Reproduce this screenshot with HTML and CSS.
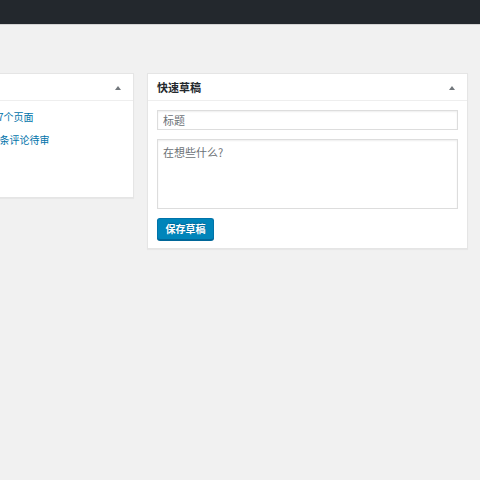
FILE: index.html
```html
<!DOCTYPE html>
<html lang="zh-CN">
<head>
<meta charset="utf-8">
<title>仪表盘</title>
<link rel="stylesheet" href="styles.css">
</head>
<body>
<div class="adminbar"></div>
<div class="content">
  <div class="columns">
    <section class="card card-left">
      <header class="card-head">
        <h2 class="card-title">概览</h2>
        <span class="toggle"></span>
      </header>
      <div class="glance">
        <ul class="glance-list">
          <li class="glance-item"><a href="#" class="glance-link">1篇文章</a></li>
          <li class="glance-item"><a href="#" class="glance-link pages-link">7个页面</a></li>
          <li class="glance-item"><a href="#" class="glance-link">1条评论</a></li>
          <li class="glance-item"><a href="#" class="glance-link mod-link">0条评论待审</a></li>
        </ul>
      </div>
    </section>
    <section class="card card-right">
      <header class="card-head">
        <h2 class="card-title">快速草稿</h2>
        <span class="toggle"></span>
      </header>
      <form class="draft">
        <input class="field title-field" type="text" placeholder="标题">
        <textarea class="field body-field" placeholder="在想些什么?"></textarea>
        <div class="actions"><button type="button" class="btn-primary">保存草稿</button></div>
      </form>
    </section>
  </div>
</div>
</body>
</html>
```
FILE: styles.css
```css
html, body {
  margin: 0;
  padding: 0;
}
body {
  background: #f1f1f1;
  font-family: "Noto Sans CJK SC", "Noto Sans", sans-serif;
  font-size: 10px;
  color: #444;
  width: 480px;
  height: 480px;
  overflow: hidden;
}
.adminbar {
  height: 24px;
  background: #23282d;
  box-shadow: 0 1px 0 rgba(0,0,0,0.12);
}
.content {
  padding-top: 49px;
}
.columns {
  display: flex;
  align-items: flex-start;
  gap: 13px;
  margin-left: -134px;
}
.card {
  background: #fff;
  border: 1px solid #e5e5e5;
  box-shadow: 0 1px 1px rgba(0,0,0,0.04);
  box-sizing: border-box;
  flex: none;
}
.card-left {
  width: 268px;
  height: 125px;
}
.card-right {
  width: 321px;
}
.card-head {
  height: 26px;
  border-bottom: 1px solid #eee;
  display: flex;
  align-items: center;
  justify-content: space-between;
  padding: 0 9px;
}
.card-title {
  margin: 0;
  font-size: 11px;
  font-weight: 700;
  color: #23282d;
  line-height: 1;
}
.card-left .card-title {
  visibility: hidden;
}
.toggle {
  width: 0;
  height: 0;
  border-left: 3px solid transparent;
  border-right: 3px solid transparent;
  border-bottom: 4px solid #72777c;
  margin-right: 3px;
  margin-top: 1px;
}
.glance {
  padding: 8px 10px 0;
}
.glance-list {
  list-style: none;
  margin: 0;
  padding: 0;
  display: grid;
  grid-template-columns: 1fr 1fr;
  row-gap: 7px;
}
.glance-item {
  line-height: 16px;
}
.glance-item:nth-child(odd) {
  visibility: hidden;
}
.glance-link {
  color: #0073aa;
  text-decoration: none;
  font-size: 10px;
}
.pages-link {
  margin-left: -2px;
}
.mod-link {
  margin-left: -6px;
}
.draft {
  padding: 9px 9px 8px;
  display: flex;
  flex-direction: column;
  gap: 9px;
}
.field {
  display: block;
  width: 100%;
  box-sizing: border-box;
  border: 1px solid #ddd;
  box-shadow: inset 0 1px 2px rgba(0,0,0,0.07);
  font-family: "Noto Sans CJK SC", "Noto Sans", sans-serif;
  font-size: 11px;
  color: #32373c;
  margin: 0;
  outline: none;
  background: #fff;
}
.field::placeholder {
  color: #6c7176;
  opacity: 1;
}
.title-field {
  height: 20px;
  padding: 0 5px;
}
.body-field {
  height: 70px;
  padding: 4px 5px;
  resize: none;
  line-height: 16px;
}
.actions {
  display: flex;
}
.btn-primary {
  height: 22px;
  padding: 0 7.5px;
  background: #0085ba;
  border: 1px solid #0073aa;
  border-bottom-color: #006799;
  border-radius: 3px;
  box-shadow: 0 1px 0 #006799;
  color: #fff;
  font-family: "Noto Sans CJK SC", "Noto Sans", sans-serif;
  font-size: 10px;
  font-weight: 700;
  text-shadow: 0 -1px 1px #006799;
  line-height: 1;
  cursor: pointer;
}
```
